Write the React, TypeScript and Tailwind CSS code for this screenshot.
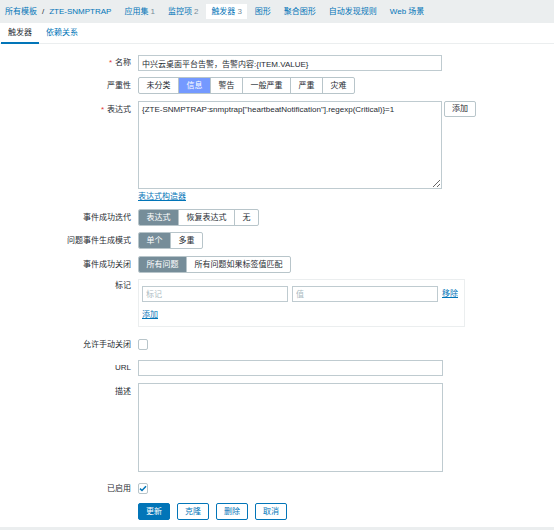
import React from 'react';

const BLUE = 'text-[#0275b8]';

function Seg({ items, active, activeCls }: { items: string[]; active: number; activeCls: string }) {
  return (
    <div className="flex h-[17px] border border-[#b8c5ca] rounded-[2px] overflow-hidden bg-white">
      {items.map((it, i) => (
        <div
          key={it}
          className={`flex items-center px-[7.5px] ${i > 0 ? 'border-l border-[#b8c5ca]' : ''} ${i === active ? activeCls : 'text-[#1f2c33]'}`}
        >
          {it}
        </div>
      ))}
    </div>
  );
}

function Row({
  label,
  required,
  top,
  className = '',
  children,
}: {
  label: string;
  required?: boolean;
  top?: string;
  className?: string;
  children: React.ReactNode;
}) {
  return (
    <div className={`flex ${top ? 'items-start' : 'items-center'} ${className}`}>
      <div className={`w-[131px] shrink-0 text-right leading-[10px] text-[#1f2c33] ${top ?? ''}`}>
        {required && <span className="text-[#e33734] mr-[3px]">*</span>}
        {label}
      </div>
      <div className="ml-[7px] flex items-start">{children}</div>
    </div>
  );
}

function Checkbox({ checked }: { checked?: boolean }) {
  return (
    <div className="w-[10px] h-[11px] border border-[#b8c5ca] rounded-[2px] bg-white flex items-center justify-center">
      {checked && (
        <svg width="8" height="7" viewBox="0 0 8 7">
          <path d="M1 3.6 L3 5.5 L7 1.2" fill="none" stroke="#0275b8" strokeWidth="1.5" />
        </svg>
      )}
    </div>
  );
}

const inputCls =
  'h-[16px] border border-[#bfcbd0] bg-white px-[3px] text-[8px] text-[#1f2c33] outline-none placeholder:text-[#acbbc2]';

export default function App() {
  const navItems = [
    { t: '应用集', n: '1' },
    { t: '监控项', n: '2' },
    { t: '触发器', n: '3', active: true },
    { t: '图形' },
    { t: '聚合图形' },
    { t: '自动发现规则' },
    { t: 'Web 场景' },
  ];

  return (
    <div className="h-[530px] bg-[#ebeeef] text-[8px] font-['Liberation_Sans','Noto_Sans_CJK_SC',sans-serif] overflow-hidden">
      {/* top nav */}
      <div className="h-[23px] flex items-center gap-[3px]">
        <div className={`px-[5px] ${BLUE}`}>
          所有模板<span className="mx-[5px] text-[#1f2c33]">/</span>ZTE-SNMPTRAP
        </div>
        {navItems.map((it) => (
          <div
            key={it.t}
            className={`h-[15px] flex items-center px-[5px] ${BLUE} ${it.active ? 'bg-white' : ''}`}
          >
            {it.t}
            {it.n && <span className="ml-[2px] text-[#768d99]">{it.n}</span>}
          </div>
        ))}
      </div>

      <div className="h-[504px] bg-white">
        {/* sub tabs */}
        <div className="h-[21px] flex pl-[1px] border-b border-[#ebeeef]">
          <div className="flex items-center px-[7px] border-b-2 border-[#0275b8] -mb-px text-[#1f2c33]">触发器</div>
          <div className={`flex items-center px-[7px] ${BLUE}`}>依赖关系</div>
        </div>

        <div className="pt-[11px] flex flex-col">
          <Row label="名称" required>
            <input className={`${inputCls} w-[304px]`} defaultValue="中兴云桌面平台告警，告警内容:{ITEM.VALUE}" />
          </Row>

          <Row label="严重性" className="mt-[6px]">
            <Seg
              items={['未分类', '信息', '警告', '一般严重', '严重', '灾难']}
              active={1}
              activeCls="bg-[#7499ff] text-white"
            />
          </Row>

          <Row label="表达式" required top="pt-[4px]" className="mt-[7px]">
            <textarea
              className="w-[304px] h-[88px] border border-[#bfcbd0] px-[3px] pt-[3px] leading-[10px] text-[8px] text-[#1f2c33] outline-none"
              defaultValue={'{ZTE-SNMPTRAP:snmptrap["heartbeatNotification"].regexp(Critical)}=1'}
            />
            <div className="ml-[2px] w-[32px] h-[16px] border border-[#b8c5ca] rounded-[2px] flex items-center justify-center text-[#1f2c33]">
              添加
            </div>
          </Row>

          <div className="mt-[2px] h-[12px] flex items-center pl-[138px]">
            <span className={`${BLUE} underline underline-offset-1`}>表达式构造器</span>
          </div>

          <Row label="事件成功迭代" className="mt-[6px]">
            <Seg items={['表达式', '恢复表达式', '无']} active={0} activeCls="bg-[#768d99] text-white" />
          </Row>

          <Row label="问题事件生成模式" className="mt-[6px]">
            <Seg items={['单个', '多重']} active={0} activeCls="bg-[#768d99] text-white" />
          </Row>

          <Row label="事件成功关闭" className="mt-[7px]">
            <Seg items={['所有问题', '所有问题如果标签值匹配']} active={0} activeCls="bg-[#768d99] text-white" />
          </Row>

          <Row label="标记" top="pt-[2px]" className="mt-[6px]">
            <div className="w-[327px] h-[48px] border border-[#ebeeef] px-[3px] pt-[6px] flex flex-col">
              <div className="flex items-center gap-[4px]">
                <input className={`${inputCls} w-[146px]`} placeholder="标记" />
                <input className={`${inputCls} w-[146px]`} placeholder="值" />
                <span className={`${BLUE} underline underline-offset-1`}>移除</span>
              </div>
              <div className="mt-[8px] h-[10px] flex items-center">
                <span className={`${BLUE} underline underline-offset-1`}>添加</span>
              </div>
            </div>
          </Row>

          <Row label="允许手动关闭" className="mt-[12px]">
            <Checkbox />
          </Row>

          <Row label="URL" className="mt-[10px]">
            <input className={`${inputCls} w-[305px]`} />
          </Row>

          <Row label="描述" top="pt-[4px]" className="mt-[7px]">
            <textarea className="w-[305px] h-[89px] border border-[#bfcbd0] px-[3px] pt-[3px] leading-[10px] text-[8px] outline-none resize-none" />
          </Row>

          <Row label="已启用" className="mt-[11px]">
            <Checkbox checked />
          </Row>

          <div className="mt-[9px] pl-[138px] flex gap-[7px]">
            <div className="w-[32px] h-[17px] rounded-[2px] bg-[#0275b8] border border-[#0275b8] text-white flex items-center justify-center">
              更新
            </div>
            {['克隆', '删除', '取消'].map((b) => (
              <div
                key={b}
                className={`w-[32px] h-[17px] rounded-[2px] border border-[#0275b8] bg-white ${BLUE} flex items-center justify-center`}
              >
                {b}
              </div>
            ))}
          </div>
        </div>
      </div>
    </div>
  );
}
